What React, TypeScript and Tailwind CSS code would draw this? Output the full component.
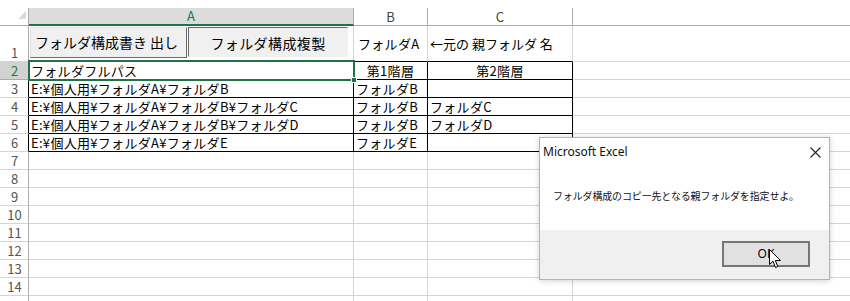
import React from "react";

const JP = { fontFamily: '"Noto Sans CJK JP", "Noto Sans", sans-serif' };

type RowData = { n: number; a?: string; b?: string; c?: string; bordered?: boolean; header?: boolean; hideNum?: boolean };

const rows: RowData[] = [
  { n: 2, a: "フォルダフルパス", b: "第1階層", c: "第2階層", bordered: true, header: true },
  { n: 3, a: "E:¥個人用¥フォルダA¥フォルダB", b: "フォルダB", c: "", bordered: true },
  { n: 4, a: "E:¥個人用¥フォルダA¥フォルダB¥フォルダC", b: "フォルダB", c: "フォルダC", bordered: true },
  { n: 5, a: "E:¥個人用¥フォルダA¥フォルダB¥フォルダD", b: "フォルダB", c: "フォルダD", bordered: true },
  { n: 6, a: "E:¥個人用¥フォルダA¥フォルダE", b: "フォルダE", c: "", bordered: true },
  { n: 7 }, { n: 8 }, { n: 9 }, { n: 10 }, { n: 11 }, { n: 12 }, { n: 13 }, { n: 14 }, { n: 15, hideNum: true },
];

function Row({ r }: { r: RowData }) {
  const bc = r.bordered ? "border-black" : "border-[#d4d4d4]";
  const sel = r.n === 2;
  return (
    <div className="flex h-[18px] shrink-0">
      <div
        className={`w-[29px] shrink-0 border-r border-b flex items-end justify-center pl-[1px] text-[13px] leading-[17px] ${
          sel ? "bg-[#d2d2d2] text-[#217346] border-r-[#217346] border-b-[#ababab]" : "text-[#555] border-b-[#d4d4d4] " + (r.bordered ? "border-r-black" : "border-r-[#ababab]")
        }`}
      >
        {r.hideNum ? "" : r.n}
      </div>
      <div className={`w-[325px] shrink-0 border-r border-b ${bc} pl-[2px] text-[13px] leading-[17px] tracking-[0.3px] whitespace-nowrap overflow-hidden`}>{r.a}</div>
      <div className={`w-[74px] shrink-0 border-r border-b ${bc} ${r.header ? "text-center" : "pl-[2px]"} text-[13px] leading-[17px] tracking-[0.3px] whitespace-nowrap`}>{r.b}</div>
      <div className={`w-[145px] shrink-0 border-r border-b ${bc} ${r.header ? "text-center" : "pl-[2px]"} text-[13px] leading-[17px] tracking-[0.3px] whitespace-nowrap`}>{r.c}</div>
      <div className="flex-1 border-b border-[#d4d4d4]" />
    </div>
  );
}

export default function App() {
  return (
    <div className="relative w-[850px] h-[301px] overflow-hidden bg-white text-black" style={JP}>
      <div className="h-[8px]" />
      {/* column header row */}
      <div className="flex h-[18px]">
        <div className="w-[29px] shrink-0 border-r border-b border-[#ababab] relative">
          <svg className="absolute left-[18px] top-[3px]" width="8" height="8" viewBox="0 0 8 8">
            <polygon points="8,0 8,8 0,8" fill="#dadada" />
          </svg>
        </div>
        <div className="w-[325px] shrink-0 bg-[#dcdcdc] border-r border-r-[#ababab] border-b-2 border-b-[#217346] text-center text-[#217346] text-[13px] leading-[16px]">A</div>
        <div className="w-[74px] shrink-0 border-r border-b border-[#ababab] text-center text-[#444] text-[13px] leading-[17px]">B</div>
        <div className="w-[145px] shrink-0 border-r border-b border-[#ababab] text-center text-[#444] text-[13px] leading-[17px]">C</div>
        <div className="flex-1 border-b border-[#ababab]" />
      </div>
      {/* row 1 */}
      <div className="flex h-[36px]">
        <div className="w-[29px] shrink-0 border-r border-[#ababab] border-b border-b-[#d4d4d4] flex items-end justify-center pl-[1px] text-[13px] leading-[17px] text-[#555]">1</div>
        <div className="w-[325px] shrink-0 border-r border-b border-r-[#d4d4d4] border-b-[#217346] flex items-start pt-[1px] pl-[1px] gap-[1px]">
          <div className="w-[157px] h-[31px] bg-[#f0f0f0] border border-t-[#e3e3e3] border-l-[#e3e3e3] border-r-[#6a6a6a] border-b-[#6a6a6a] flex items-center justify-center text-[14px] pr-[4px]">
            フォルダ構成書き 出し
          </div>
          <div className="w-[160px] h-[30px] bg-[#f0f0f0] border border-t-[#6a6a6a] border-l-[#6a6a6a] border-r-[#f0f0f0] border-b-[#f0f0f0] flex items-center justify-center text-[14px] pt-[2px] tracking-[0.4px]">
            フォルダ構成複製
          </div>
        </div>
        <div className="w-[74px] shrink-0 border-r border-b border-r-[#d4d4d4] border-b-black flex items-center pl-[4px] text-[13px] tracking-[0.3px] whitespace-nowrap">フォルダA</div>
        <div className="w-[145px] shrink-0 border-r border-b border-r-[#d4d4d4] border-b-black flex items-center pl-[2px] text-[13px] whitespace-nowrap">←元の 親フォルダ 名</div>
        <div className="flex-1 border-b border-[#d4d4d4]" />
      </div>
      {rows.map((r) => (
        <Row key={r.n} r={r} />
      ))}

      {/* selection */}
      <div className="absolute left-[28px] top-[60px] w-[327px] h-[21px] border-2 border-[#217346]" />
      <div className="absolute left-[351px] top-[77px] w-[6px] h-[6px] bg-[#217346] border border-white" />

      {/* dialog */}
      <div
        className="absolute left-[539px] top-[137px] w-[291px] h-[143px] border border-[#eda65e] bg-white flex flex-col shadow-[0_1px_6px_rgba(0,0,0,0.18)]"
      >
        <div className="h-[28px] flex items-center justify-between pl-[3px] pr-[8px]">
          <span className="text-[12px] text-[#111]" style={{ fontFamily: '"Noto Sans", sans-serif' }}>Microsoft Excel</span>
          <svg width="11" height="11" viewBox="0 0 11 11">
            <path d="M0.5 0.5 L10.5 10.5 M10.5 0.5 L0.5 10.5" stroke="#222" strokeWidth="1.1" />
          </svg>
        </div>
        <div className="flex-1 flex items-center pl-[13px] pb-[6px] text-[10px] tracking-[-0.15px] text-[#111]">
          フォルダ構成のコピー先となる親フォルダを指定せよ。
        </div>
        <div className="h-[49px] bg-[#f0f0f0] flex items-start justify-end pt-[11px] pr-[19px]">
          <div className="w-[88px] h-[26px] bg-[#e1e1e1] border-2 border-[#767676] flex items-center justify-center text-[12px] text-black" style={{ fontFamily: '"Noto Sans", sans-serif' }}>
            OK
          </div>
        </div>
      </div>

      {/* cursor */}
      <svg className="absolute left-[769px] top-[249px]" width="13" height="20" viewBox="0 0 13 20">
        <path d="M0.5 0.5 L0.5 15.5 L4 12.2 L6.5 18.5 L8.8 17.6 L6.3 11.5 L11.5 11.5 Z" fill="white" stroke="black" strokeWidth="1" strokeLinejoin="round" />
      </svg>
    </div>
  );
}
